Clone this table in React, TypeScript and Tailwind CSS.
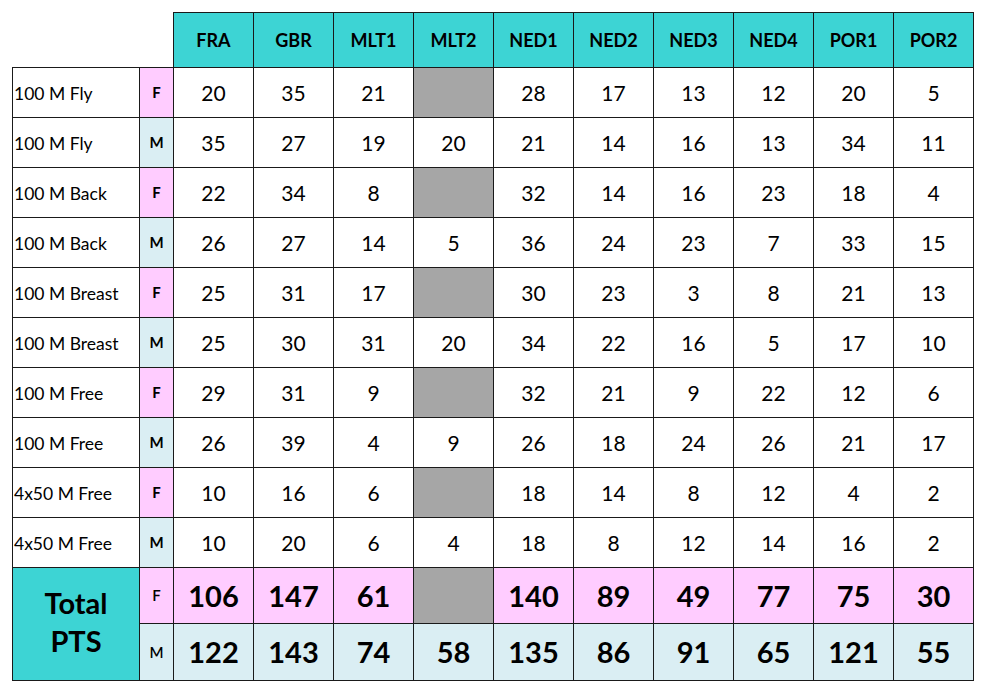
import React from "react";

const teams = ["FRA", "GBR", "MLT1", "MLT2", "NED1", "NED2", "NED3", "NED4", "POR1", "POR2"];

// null = no entry (grey cell)
const rows: { event: string; g: "F" | "M"; pts: (number | null)[] }[] = [
  { event: "100 M Fly", g: "F", pts: [20, 35, 21, null, 28, 17, 13, 12, 20, 5] },
  { event: "100 M Fly", g: "M", pts: [35, 27, 19, 20, 21, 14, 16, 13, 34, 11] },
  { event: "100 M Back", g: "F", pts: [22, 34, 8, null, 32, 14, 16, 23, 18, 4] },
  { event: "100 M Back", g: "M", pts: [26, 27, 14, 5, 36, 24, 23, 7, 33, 15] },
  { event: "100 M Breast", g: "F", pts: [25, 31, 17, null, 30, 23, 3, 8, 21, 13] },
  { event: "100 M Breast", g: "M", pts: [25, 30, 31, 20, 34, 22, 16, 5, 17, 10] },
  { event: "100 M Free", g: "F", pts: [29, 31, 9, null, 32, 21, 9, 22, 12, 6] },
  { event: "100 M Free", g: "M", pts: [26, 39, 4, 9, 26, 18, 24, 26, 21, 17] },
  { event: "4x50 M Free", g: "F", pts: [10, 16, 6, null, 18, 14, 8, 12, 4, 2] },
  { event: "4x50 M Free", g: "M", pts: [10, 20, 6, 4, 18, 8, 12, 14, 16, 2] },
];

const totalF = [106, 147, 61, null, 140, 89, 49, 77, 75, 30];
const totalM = [122, 143, 74, 58, 135, 86, 91, 65, 121, 55];

const cell = "border border-[#1a1a1a] p-0 text-center align-middle";

const App: React.FC = () => {
  return (
    <div className="min-h-[691px] w-[984px] bg-white pl-3 pt-3 text-black" style={{ fontFamily: "Lato, 'Open Sans', sans-serif" }}>
      <table className="table-fixed border-collapse">
        <colgroup>
          <col className="w-[127px]" />
          <col className="w-[34px]" />
          {teams.map((t) => (
            <col key={t} className="w-[80px]" />
          ))}
        </colgroup>
        <thead>
          <tr className="h-[55px]">
            <th className="p-0" />
            <th className="p-0" />
            {teams.map((t) => (
              <th key={t} className={`${cell} bg-[#3dd4d4] text-[18px] font-bold`}>
                {t}
              </th>
            ))}
          </tr>
        </thead>
        <tbody>
          {rows.map((r, i) => (
            <tr key={i} className="h-[50px]">
              <td className={`${cell} whitespace-nowrap pl-px pt-[4px] text-left text-[17.5px]`}>{r.event}</td>
              <td className={`${cell} text-[15px] font-bold ${r.g === "F" ? "bg-[#ffccff]" : "bg-[#daeef3]"}`}>
                {r.g}
              </td>
              {r.pts.map((p, j) => (
                <td key={j} className={`${cell} text-[21px] ${p === null ? "bg-[#a6a6a6]" : ""}`}>
                  {p}
                </td>
              ))}
            </tr>
          ))}
          <tr className="h-[56px]">
            <td rowSpan={2} className={`${cell} bg-[#3dd4d4] pb-[4px] text-[29px] font-bold leading-[38px]`}>
              Total
              <br />
              PTS
            </td>
            <td className={`${cell} bg-[#ffccff] text-[15px] font-semibold`}>F</td>
            {totalF.map((p, j) => (
              <td key={j} className={`${cell} text-[29px] font-bold ${p === null ? "bg-[#a6a6a6]" : "bg-[#ffccff]"}`}>
                {p}
              </td>
            ))}
          </tr>
          <tr className="h-[57px]">
            <td className={`${cell} bg-[#daeef3] text-[15px] font-semibold`}>M</td>
            {totalM.map((p, j) => (
              <td key={j} className={`${cell} bg-[#daeef3] text-[29px] font-bold`}>
                {p}
              </td>
            ))}
          </tr>
        </tbody>
      </table>
    </div>
  );
};

export default App;
